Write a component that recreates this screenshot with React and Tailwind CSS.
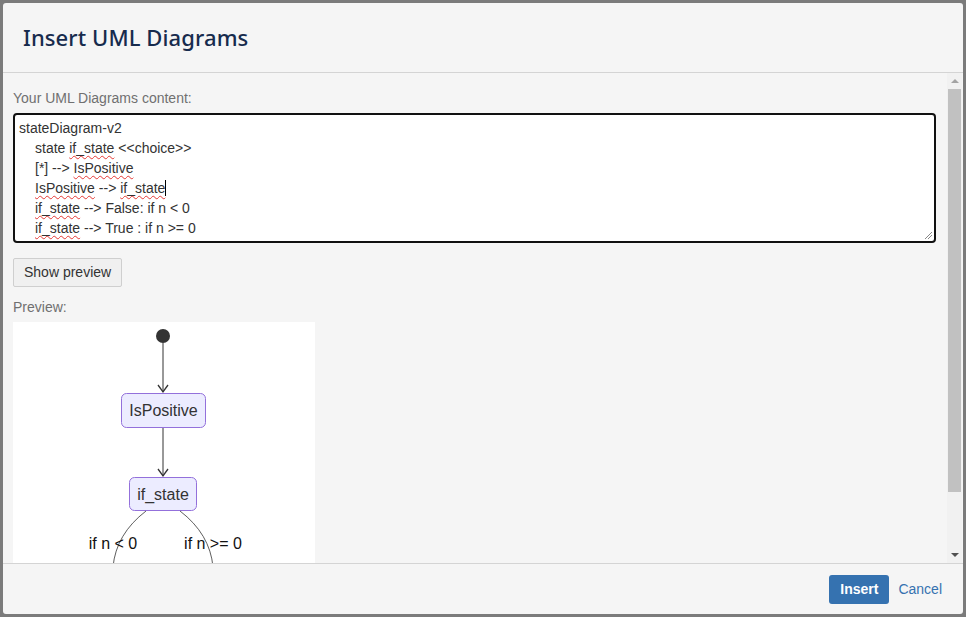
import React from "react";

const Squiggle = ({ children }) => (
  <span className="underline decoration-wavy decoration-[#e53935] decoration-1 underline-offset-[2px]">
    {children}
  </span>
);

const Diagram = () => (
  <svg width="302" height="260" viewBox="0 0 302 260" className="block">
    <circle cx="150" cy="14" r="7" fill="#333" />
    <line x1="150" y1="21" x2="150" y2="70" stroke="#333" strokeWidth="1" />
    <path d="M145 63 L150 70 L155 63" fill="none" stroke="#333" strokeWidth="1.3" />
    <rect x="108.5" y="71.5" width="84" height="34" rx="5" fill="#ECECFF" stroke="#9370DB" />
    <text x="150.5" y="94" textAnchor="middle" fontFamily="Liberation Sans, Arial, sans-serif" fontSize="16" fill="#333">
      IsPositive
    </text>
    <line x1="150" y1="106" x2="150" y2="154" stroke="#333" strokeWidth="1" />
    <path d="M145 147 L150 154 L155 147" fill="none" stroke="#333" strokeWidth="1.3" />
    <rect x="116.5" y="155.5" width="67" height="33" rx="5" fill="#ECECFF" stroke="#9370DB" />
    <text x="150" y="177.5" textAnchor="middle" fontFamily="Liberation Sans, Arial, sans-serif" fontSize="16" fill="#333">
      if_state
    </text>
    <path d="M133 189 Q103 212 100 245" fill="none" stroke="#333" strokeWidth="0.8" />
    <path d="M167 189 Q197 212 200 245" fill="none" stroke="#333" strokeWidth="0.8" />
    <text x="100" y="227" textAnchor="middle" fontFamily="Liberation Sans, Arial, sans-serif" fontSize="16" fill="#111">
      if n &lt; 0
    </text>
    <text x="200" y="227" textAnchor="middle" fontFamily="Liberation Sans, Arial, sans-serif" fontSize="16" fill="#111">
      if n &gt;= 0
    </text>
  </svg>
);

const App = () => {
  return (
    <div className="w-[966px] h-[617px] bg-[#7b7b7b] p-[3px] font-['Liberation_Sans',Arial,sans-serif]">
      <div className="flex flex-col h-full bg-[#f5f5f5] rounded-[3px] overflow-hidden">
        {/* header */}
        <div className="h-[70px] shrink-0 flex items-center px-[20px] border-b border-[#d4d4d4]">
          <h1 className="font-['Noto_Sans',sans-serif] text-[22px] font-medium text-[#172b4d] tracking-[0.1px]">
            Insert UML Diagrams
          </h1>
        </div>

        {/* body */}
        <div className="flex flex-1 min-h-0">
          <div className="flex-1 overflow-hidden pl-[10px] pr-[11px] pt-[15px]">
            <div className="text-[14px] leading-[20px] text-[#707070]">Your UML Diagrams content:</div>
            <div className="relative mt-[5px] h-[130px] bg-white border-2 border-[#111] rounded-[4px] px-[4px] pt-[3px] text-[14px] leading-[20px] text-[#333]">
              <div>stateDiagram-v2</div>
              <div className="pl-[16px]">
                state <Squiggle>if_state</Squiggle> &lt;&lt;choice&gt;&gt;
              </div>
              <div className="pl-[16px]">
                [*] --&gt; <Squiggle>IsPositive</Squiggle>
              </div>
              <div className="pl-[16px]">
                <Squiggle>IsPositive</Squiggle> --&gt; <Squiggle>if_state</Squiggle>
                <span className="inline-block w-px h-[16px] bg-black align-[-3px]" />
              </div>
              <div className="pl-[16px]">
                <Squiggle>if_state</Squiggle> --&gt; False: if n &lt; 0
              </div>
              <div className="pl-[16px]">
                <Squiggle>if_state</Squiggle> --&gt; True : if n &gt;= 0
              </div>
              <svg width="9" height="9" viewBox="0 0 9 9" className="absolute right-[1px] bottom-[1px]">
                <line x1="1" y1="8" x2="8" y2="1" stroke="#888" strokeWidth="1" />
                <line x1="4" y1="8" x2="8" y2="4" stroke="#888" strokeWidth="1" />
              </svg>
            </div>
            <button
              type="button"
              className="mt-[15px] h-[29px] px-[10px] bg-[#f0f0f0] border border-[#cfcfcf] rounded-[2px] text-[14px] text-[#333]"
            >
              Show preview
            </button>
            <div className="mt-[10px] text-[14px] leading-[20px] text-[#707070]">Preview:</div>
            <div className="mt-[5px] w-[302px] bg-white">
              <Diagram />
            </div>
          </div>

          {/* scrollbar */}
          <div className="w-[15px] shrink-0 flex flex-col items-center bg-[#f1f1f1] mr-px">
            <div className="h-[16px] w-full flex items-center justify-center">
              <div className="w-0 h-0 border-l-[4px] border-r-[4px] border-b-[4px] border-l-transparent border-r-transparent border-b-[#a3a3a3]" />
            </div>
            <div className="w-[13px] h-[403px] bg-[#c1c1c1]" />
            <div className="flex-1" />
            <div className="h-[16px] w-full flex items-center justify-center">
              <div className="w-0 h-0 border-l-[4px] border-r-[4px] border-t-[4px] border-l-transparent border-r-transparent border-t-[#505050]" />
            </div>
          </div>
        </div>

        {/* footer */}
        <div className="h-[51px] shrink-0 flex items-center justify-end gap-[9px] pr-[21px] border-t border-[#d4d4d4]">
          <button
            type="button"
            className="h-[29px] w-[60px] bg-[#3572b0] rounded-[3px] text-white text-[14px] font-bold"
          >
            Insert
          </button>
          <button type="button" className="text-[14px] text-[#3572b0]">
            Cancel
          </button>
        </div>
      </div>
    </div>
  );
};

export default App;
